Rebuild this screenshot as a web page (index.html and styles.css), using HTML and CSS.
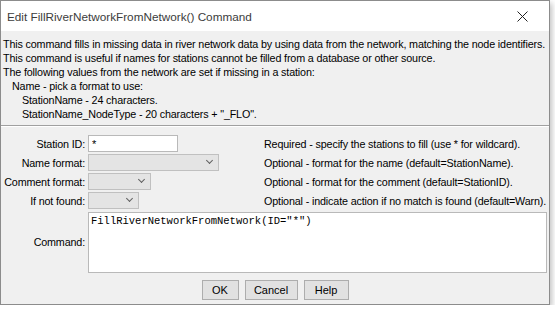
FILE: index.html
```html
<!DOCTYPE html>
<html lang="en">
<head>
    <meta charset="UTF-8">
    <title>Edit FillRiverNetworkFromNetwork() Command</title>
    <link rel="stylesheet" href="styles.css">
</head>
<body>
    <div class="dialog">
        <div class="titlebar">
            <span class="title">Edit FillRiverNetworkFromNetwork() Command</span>
            <svg class="close" width="11" height="11" viewBox="0 0 11 11">
                <path d="M0.5 0.5 L10.5 10.5 M10.5 0.5 L0.5 10.5" stroke="#222" stroke-width="1" fill="none"/>
            </svg>
        </div>

        <div class="content">
            <div class="notes">
                <div>This command fills in missing data in river network data by using data from the network, matching the node identifiers.</div>
                <div>This command is useful if names for stations cannot be filled from a database or other source.</div>
                <div>The following values from the network are set if missing in a station:</div>
                <div class="indent1">Name - pick a format to use:</div>
                <div class="indent2">StationName - 24 characters.</div>
                <div class="indent2">StationName_NodeType - 20 characters + "_FLO".</div>
            </div>

            <div class="separator"></div>

            <div class="form">
                <label>Station ID:</label>
                <div><input type="text" class="field-id" value="*"></div>
                <div class="hint">Required - specify the stations to fill (use * for wildcard).</div>

                <label>Name format:</label>
                <div><span class="combo combo-name"></span></div>
                <div class="hint">Optional - format for the name (default=StationName).</div>

                <label>Comment format:</label>
                <div><span class="combo combo-comment"></span></div>
                <div class="hint">Optional - format for the comment (default=StationID).</div>

                <label>If not found:</label>
                <div><span class="combo combo-notfound"></span></div>
                <div class="hint">Optional - indicate action if no match is found (default=Warn).</div>

                <label class="command-label">Command:</label>
                <textarea class="command" readonly>FillRiverNetworkFromNetwork(ID="*")</textarea>
            </div>

            <div class="buttons">
                <button class="btn-ok">OK</button>
                <button class="btn-cancel">Cancel</button>
                <button class="btn-help">Help</button>
            </div>
        </div>
    </div>
</body>
</html>
```

FILE: styles.css
```css
body {
    margin: 0;
    background: #ffffff;
    font-family: "Liberation Sans", Arial, sans-serif;
    font-size: 10.75px;
    letter-spacing: -0.15px;
    color: #000;
}
.dialog {
    width: 548px;
    height: 303px;
    border: 1px solid #8c8c8c;
    background: #f0f0f0;
    box-shadow: 2px 3px 6px rgba(0,0,0,0.25);
    display: flex;
    flex-direction: column;
    white-space: nowrap;
}
.titlebar {
    height: 30px;
    background: #ffffff;
    display: flex;
    align-items: center;
    justify-content: space-between;
    padding: 0 21px 0 6px;
}
.title {
    font-family: "Liberation Sans", Arial, sans-serif;
    font-size: 11.75px;
    letter-spacing: 0;
    color: #3c3c3c;
}
.content {
    flex: 1;
    display: flex;
    flex-direction: column;
}
.notes {
    padding: 6px 0 0 2px;
    line-height: 14px;
}
.indent1 {
    padding-left: 9px;
}
.indent2 {
    padding-left: 19px;
}
.separator {
    height: 0;
    border-top: 1px solid #a0a0a0;
    border-bottom: 1px solid #ffffff;
    margin: 4px 0 8px;
}
.form {
    display: grid;
    grid-template-columns: 84px 172px 1fr;
    column-gap: 3px;
    row-gap: 2px;
    align-items: center;
    padding-right: 2px;
}
.form label {
    text-align: right;
    color: #000;
}
input, .combo {
    display: block;
    box-sizing: border-box;
    height: 17px;
    border: 1px solid #b4b4b4;
    font-family: "Liberation Sans", Arial, sans-serif;
    font-size: 11px;
}
input {
    background: #ffffff;
    padding: 0 3px;
    border-color: #b9b9b9;
}
.field-id {
    width: 90px;
}
.combo {
    position: relative;
    background: #e4e4e4;
    border-color: #c0c0c0;
}
.combo::after {
    content: "";
    position: absolute;
    right: 6px;
    top: 3px;
    width: 4px;
    height: 4px;
    border-right: 1px solid #606060;
    border-bottom: 1px solid #606060;
    transform: rotate(45deg);
}
.combo-name {
    width: 131px;
}
.combo-comment {
    width: 63px;
}
.combo-notfound {
    width: 51px;
}
.hint {
    padding-left: 1px;
}
.command {
    grid-column: 2 / 4;
    box-sizing: border-box;
    height: 61px;
    margin-top: 1px;
    border: 1px solid #b9b9b9;
    background: #ffffff;
    font-family: "Liberation Mono", "Courier New", monospace;
    font-size: 10.5px;
    letter-spacing: 0;
    padding: 2px 2px;
    resize: none;
    outline: none;
}
.buttons {
    display: flex;
    justify-content: center;
    gap: 6px;
    padding-top: 7px;
}
.buttons button {
    height: 20px;
    border: 1px solid #adadad;
    background: #e1e1e1;
    font-family: "Liberation Sans", Arial, sans-serif;
    font-size: 11px;
    color: #000;
    padding: 0;
}
.btn-ok {
    width: 37px;
}
.btn-cancel {
    width: 53px;
}
.btn-help {
    width: 45px;
}
```
